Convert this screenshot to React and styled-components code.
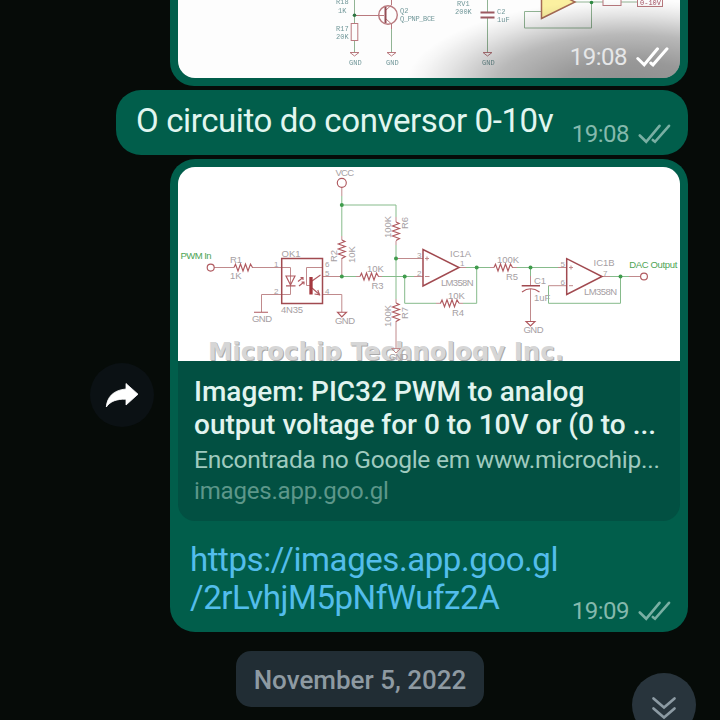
import React from 'react';
import styled, { createGlobalStyle } from 'styled-components';

const GlobalStyle = createGlobalStyle`
  body { margin: 0; background: #060b08; font-family: Roboto, sans-serif; }
  * { box-sizing: border-box; }
`;

const Chat = styled.main`
  position: relative;
  width: 720px;
  height: 720px;
  overflow: hidden;
  background: #060b08;
  padding-right: 32px;
  display: flex;
  flex-direction: column;
  align-items: flex-end;
`;

const Bubble = styled.section`
  background: #015e4b;
  position: relative;
  flex: none;
`;

const PhotoBubble = styled(Bubble)`
  width: 518px;
  height: 86px;
  padding: 0 8px 8px;
  border-radius: 0 0 24px 24px;
`;

const Photo = styled.div`
  position: relative;
  height: 78px;
  border-radius: 0 0 17px 17px;
  overflow: hidden;
  background: #fdfdfd;
`;

const PhotoShade = styled.div`
  position: absolute;
  inset: 0;
  background: radial-gradient(ellipse 225px 88px at 90% 112%, rgba(0,0,0,.44) 0%, rgba(0,0,0,.4) 30%, rgba(0,0,0,.27) 60%, rgba(0,0,0,.1) 82%, rgba(0,0,0,.03) 93%, transparent 100%);
`;

const TextBubble = styled(Bubble)`
  width: 572px;
  height: 65px;
  margin-top: 4px;
  border-radius: 25px;
  padding: 11px 0 0 20px;
`;

const MessageText = styled.p`
  margin: 0;
  color: #e1f6f0;
  font-size: 33px;
  line-height: 40px;
  letter-spacing: -0.38px;
  white-space: nowrap;
`;

const Stamp = styled.div`
  position: absolute;
  right: ${p => p.$right}px;
  bottom: ${p => p.$bottom}px;
  display: flex;
  align-items: center;
  gap: 9px;
  height: 28px;
  font-size: 24px;
  line-height: 28px;
  letter-spacing: -0.5px;
  color: ${p => p.$bright ? '#e6e7e8' : '#85b9ad'};
  svg { display: block; color: ${p => p.$bright ? '#fff' : '#79afa3'}; stroke-width: ${p => p.$bright ? 3 : 2.6}; }
`;

const LinkBubble = styled(Bubble)`
  width: 518px;
  height: 473px;
  margin-top: 4px;
  padding: 8px;
  border-radius: 25px;
`;

const Preview = styled.article`
  height: 354px;
  border-radius: 17px;
  overflow: hidden;
  background: #025042;
`;

const PreviewImage = styled.div`
  height: 194px;
  background: #fff;
  svg { display: block; }
`;

const PreviewBody = styled.div`
  padding: 14px 16px 0;
  white-space: nowrap;
`;

const PreviewTitle = styled.div`
  color: #e1f4ef;
  font-size: 28px;
  font-weight: 500;
  line-height: 33px;
`;

const PreviewSource = styled.div`
  margin-top: 3px;
  color: #9fcabf;
  font-size: 24.5px;
  letter-spacing: -0.25px;
  line-height: 31px;
`;

const PreviewDomain = styled.div`
  margin-top: 1px;
  color: #5d978a;
  font-size: 24px;
  letter-spacing: -0.18px;
  line-height: 31px;
`;

const Link = styled.a`
  display: block;
  padding: 20px 12px 0;
  color: #53bdeb;
  font-size: 33px;
  letter-spacing: -0.43px;
  line-height: 38px;
  white-space: nowrap;
`;

const Forward = styled.button`
  position: absolute;
  left: -80px;
  top: 204px;
  width: 64px;
  height: 64px;
  padding: 0;
  border: 0;
  border-radius: 50%;
  background: #0b1114;
  svg { display: block; }
`;

const DateChip = styled.div`
  flex: none;
  align-self: center;
  position: relative;
  width: 248px;
  height: 56px;
  margin: 19px -32px 0 0;
  border-radius: 15px;
  background: #212d34;
  color: #8e9aa2;
  font-size: 26px;
  font-weight: 500;
  line-height: 58px;
  text-align: center;
  white-space: nowrap;
`;

const ScrollDown = styled.button`
  position: absolute;
  right: 24px;
  bottom: -17px;
  width: 64px;
  height: 64px;
  border: 0;
  padding: 0;
  border-radius: 50%;
  background: #28343c;
  svg { display: block; }
`;

const Drawing = styled.svg`
  font-family: "Liberation Sans", sans-serif;
  font-size: 9.5px;
  fill: none;
  stroke-width: 1;
  text { fill: #a6a0a3; stroke: none; }
  .wire { stroke: #86bb8b; }
  .pin { stroke: #c08a8c; }
  .part { stroke: #b05a60; stroke-width: 1.15; }
  .bold { stroke: #a14a50; stroke-width: 1.5; }
  .node { fill: #3f9c4c; }
  text.port { fill: #4da455; }
  .tiny { font-size: 8px; }
  .brand { font-family: "DejaVu Sans", sans-serif; font-weight: bold; font-size: 24.5px; }
  text.shadow { fill: #aaa; }
  text.face { fill: #d6d6d6; }
`;

const PhotoDrawing = styled.svg`
  display: block;
  font-family: "Liberation Mono", monospace;
  font-size: 7px;
  fill: none;
  stroke: #b9797e;
  filter: blur(0.4px);
  text { fill: #72989a; stroke: none; }
  text.label { fill: #a65365; }
  .wire { stroke: #91b494; }
`;

const Ticks = () => (
  <svg width="33" height="20" viewBox="0 0 33 20" fill="none" stroke="currentColor" strokeLinecap="round">
    <path d="M1.8 11.5 L8.2 17.8 L21.5 1.8" />
    <path d="M14.8 16 L17 17.8 L31 1.8" />
  </svg>
);

const TimeStamp = ({ time, ...rest }) => <Stamp {...rest}><span>{time}</span><Ticks /></Stamp>;

const Resistor = ({ x, y, vertical }) => (
  <path
    className="part"
    transform={`translate(${x} ${y})${vertical ? ' rotate(90)' : ''}`}
    d="M0 0 L1.5 -3.2 L4 3.5 L6.5 -3.5 L9 3.5 L11.5 -3.5 L14 3.5 L16.5 -3.5 L18.5 0"
  />
);

const Side = ({ x, y, children }) => <text transform={`translate(${x} ${y}) rotate(-90)`}>{children}</text>;

const nodes = [[341.8, 205], [396, 258.5], [341.8, 276.5], [404.7, 276.5], [476.7, 267.5], [530.5, 267.5], [620.5, 276.5]];

const Schematic = () => (
  <Drawing width="502" height="194" viewBox="178 167 502 194">
    <text className="brand shadow" x="209" y="360.8" textLength="356" lengthAdjust="spacingAndGlyphs">Microchip Technology Inc.</text>
    <text className="brand face" x="208" y="360" textLength="356" lengthAdjust="spacingAndGlyphs">Microchip Technology Inc.</text>
    <path className="wire" d="M341.8 205 H396 V217 M341.8 196 V236 M396 245 V299 M341.8 276.5 H356 M382 276.5 H414 M404.7 276.5 V303.3 H436 M463 303.3 H476.7 V267.5 M466 267.5 H490 M517 267.5 H558 M530.5 267.5 V276 M548.5 285.7 V303.3 H620.5 V276.5 M610 276.5 H629" />
    <path className="pin" d="M341.8 187 V196 M341.8 236 V240 M341.8 258 V276.5 M322.5 276.5 H341.8 M322.5 294.5 H341.8 V312 M396 217 V222 M396 241 V245 M396 299 V303 M396 321 V348 M356 276.5 H360 M378 276.5 H382 M414 276.5 H423 M396 258.5 H423 M459 267.5 H466 M490 267.5 H494 M512 267.5 H517 M436 303.3 H441 M459 303.3 H463 M558 267.5 H567 M548.5 285.7 H567 M602 276.5 H610 M629 276.5 H640 M214 267.5 H234 M252 267.5 H290.5 V294.5 H261.5 V312 M530.5 276 V285 M530.5 289 V321 M322.5 267.5 H306.5 V285.5 H310" />
    <Resistor x={234} y={267.5} />
    <Resistor x={360} y={276.5} />
    <Resistor x={494} y={267.5} />
    <Resistor x={440.5} y={303.3} />
    <Resistor x={341.8} y={240} vertical />
    <Resistor x={396} y={222} vertical />
    <Resistor x={396} y={303} vertical />
    <rect className="bold" x="281.7" y="258.5" width="40.8" height="45" />
    <path className="bold" d="M423 249.5 V286 L459 267.5 Z M566.7 258.7 V294.5 L602 276.5 Z M521.7 285.7 H540" />
    <path className="part" d="M522 292 Q530.5 285.5 539.5 292 M254 312.2 H268 M337.5 312.2 H346.5 L341.8 317 Z M526 321.5 H535 L530.5 326 Z M286 276 H295 L290.5 285 Z M286 285.8 H295.5 M312 281 L320.5 275 M312 288 L320 295" />
    <path className="pin" d="M391.5 348.5 H400.5 L396 353 Z" />
    <path d="M311 277 V294.5" stroke="#a4383f" strokeWidth="3.3" />
    <path className="part" d="M298 281.5 L303 277.5 M299 286 L304 282 M300.5 277.5 H303 V280 M301.5 282 H304 V284.5 M314.5 294 L319.5 294.8 L317.8 290" />
    <circle className="part" cx="341.8" cy="182.8" r="4.5" />
    <circle className="part" cx="210.7" cy="267.6" r="3.5" />
    <circle className="part" cx="644" cy="276.5" r="3.4" />
    <path className="pin" d="M425 258.5 H429 M427 256.5 V260.5 M425 276.5 H429.5 M569 267.5 H573 M571 265.5 V269.5 M569 285.7 H573" />
    {nodes.map(([x, y]) => <circle key={`${x}-${y}`} className="node" cx={x} cy={y} r="2" />)}
    <text x="335.5" y="176" textLength="18.5">VCC</text>
    <text className="port" x="180.5" y="258.5" textLength="31">PWM In</text>
    <text className="port" x="629.3" y="267.5" textLength="48">DAC Output</text>
    <text x="230" y="263">R1</text>
    <text x="230" y="279">1K</text>
    <text x="281.5" y="257">OK1</text>
    <text x="281" y="312.5" textLength="22">4N35</text>
    <text x="252" y="321.5" textLength="20">GND</text>
    <text x="335" y="323.8" textLength="20">GND</text>
    <Side x={337} y={262}>R2</Side>
    <Side x={354.5} y={263}>10K</Side>
    <Side x={391} y={238}>100K</Side>
    <Side x={408} y={229}>R6</Side>
    <Side x={391} y={327}>100K</Side>
    <Side x={408} y={319}>R7</Side>
    <text x="367" y="271.5">10K</text>
    <text x="371.5" y="288.5">R3</text>
    <text x="450" y="257">IC1A</text>
    <text x="441" y="285.7" textLength="32.5">LM358N</text>
    <text x="448" y="298.7">10K</text>
    <text x="452" y="315.5">R4</text>
    <text x="497" y="262.5">100K</text>
    <text x="506" y="279.5">R5</text>
    <text x="534" y="283.5">C1</text>
    <text x="534" y="301">1uF</text>
    <text x="523.5" y="332.5" textLength="20">GND</text>
    <text x="593.5" y="266">IC1B</text>
    <text x="584" y="295" textLength="33">LM358N</text>
    <text x="389" y="359.5" textLength="19">GND</text>
    <text className="tiny" x="274" y="266.5">1</text>
    <text className="tiny" x="274" y="293.5">2</text>
    <text className="tiny" x="325" y="267">6</text>
    <text className="tiny" x="325" y="276">5</text>
    <text className="tiny" x="325" y="293.5">4</text>
    <text className="tiny" x="417" y="257.5">3</text>
    <text className="tiny" x="417" y="275.5">2</text>
    <text className="tiny" x="460" y="266">1</text>
    <text className="tiny" x="560.5" y="266.5">5</text>
    <text className="tiny" x="560.5" y="284.5">6</text>
    <text className="tiny" x="603" y="275.5">7</text>
  </Drawing>
);

const PhotoSchematic = () => (
  <PhotoDrawing width="502" height="78" viewBox="178 0 502 78">
    <path className="wire" d="M354.5 0 V23 M354.5 41 V52 M391.5 25 V52 M487.5 0 V12 M487.5 18 V52 M541 11.5 H524.5 V28 H591.5 V2 M575 2 H603 M621 2 H637" />
    <rect x="351.2" y="23.5" width="6.6" height="17" />
    <path d="M354.5 15.5 H384 M391.5 0 V5 L386 10 M386 19 L391.5 24 V29 M350 52.5 H359 L354.5 56 Z M387 52.5 H396 L391.5 56 Z M483 52.5 H492 L487.5 56 Z" />
    <circle cx="388" cy="15" r="9.3" strokeWidth="1.4" />
    <path d="M385.5 7 V23" strokeWidth="2" stroke="#934c54" />
    <path d="M480.5 12.5 H494.5 M480.5 17.5 H494.5" strokeWidth="2" stroke="#9c5960" />
    <path d="M541.5 -10 V18.5 L575 2 L551 -10 Z" fill="#fbf0a0" stroke="#a66b55" strokeWidth="1.5" />
    <rect x="603" y="-4" width="18" height="9.5" />
    <rect x="637.5" y="-3" width="25" height="9.5" />
    <circle cx="354.5" cy="15.3" r="1.8" fill="#2e7542" stroke="none" />
    <circle cx="591.5" cy="2.5" r="1.8" fill="#2e8b42" stroke="none" />
    <text x="336" y="4">R18</text>
    <text x="338" y="13">1K</text>
    <text x="336" y="30.5">R17</text>
    <text x="336" y="38.5">20K</text>
    <text x="400" y="13">Q2</text>
    <text x="400" y="21" textLength="35">Q_PNP_BCE</text>
    <text x="457" y="5.5">RV1</text>
    <text x="455" y="13.5">200K</text>
    <text x="497" y="13.5">C2</text>
    <text x="497" y="21.5">1uF</text>
    <text x="349" y="65">GND</text>
    <text x="386" y="65">GND</text>
    <text x="482" y="65">GND</text>
    <text className="label" x="640" y="4.8">0-10V</text>
  </PhotoDrawing>
);

export default function App() {
  return (
    <>
      <GlobalStyle />
      <Chat>
        <PhotoBubble>
          <Photo>
            <PhotoSchematic />
            <PhotoShade />
          </Photo>
          <TimeStamp time="19:08" $bright $right={19} $bottom={15} />
        </PhotoBubble>
        <TextBubble>
          <MessageText>O circuito do conversor 0-10v</MessageText>
          <TimeStamp time="19:08" $right={17} $bottom={7} />
        </TextBubble>
        <LinkBubble>
          <Preview>
            <PreviewImage><Schematic /></PreviewImage>
            <PreviewBody>
              <PreviewTitle>Imagem: PIC32 PWM to analog<br />output voltage for 0 to 10V or (0 to ...</PreviewTitle>
              <PreviewSource>Encontrada no Google em www.microchip...</PreviewSource>
              <PreviewDomain>images.app.goo.gl</PreviewDomain>
            </PreviewBody>
          </Preview>
          <Link>https://images.app.goo.gl<br />/2rLvhjM5pNfWufz2A</Link>
          <TimeStamp time="19:09" $right={17} $bottom={7} />
          <Forward aria-label="Forward">
            <svg width="64" height="64" viewBox="0 0 64 64">
              <path d="M36 20.5 L48 31.2 L36 42 V36.2 C27 36 20.5 38 16.3 44 C17 34.5 23 27 36 26 Z" fill="#fff" stroke="#fff" strokeWidth="0.8" strokeLinejoin="round" />
            </svg>
          </Forward>
        </LinkBubble>
        <DateChip>November 5, 2022</DateChip>
        <ScrollDown aria-label="Scroll to latest">
          <svg width="64" height="64" viewBox="0 0 64 64" fill="none" stroke="#8c9aa3" strokeWidth="2.7" strokeLinecap="round">
            <path d="M21.5 25.5 L32 34.5 L42.5 25.5 M21.5 35.5 L32 44.5 L42.5 35.5" />
          </svg>
        </ScrollDown>
      </Chat>
    </>
  );
}
